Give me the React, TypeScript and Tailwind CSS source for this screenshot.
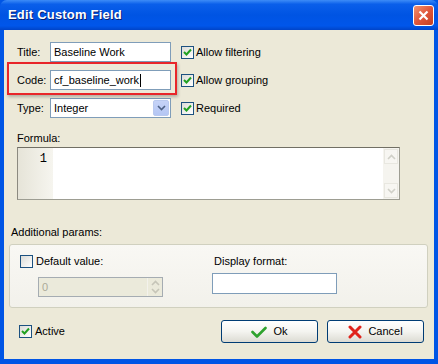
import React from 'react';

const font = { fontFamily: '"Liberation Sans", Arial, sans-serif' };

const Check: React.FC<{ checked?: boolean }> = ({ checked }) => (
    <div className="w-[13px] h-[13px] border border-[#1c5180] bg-gradient-to-br from-[#dcdcd7] to-white flex items-center justify-center shrink-0">
        {checked && (
            <svg width="9" height="9" viewBox="0 0 9 9">
                <path d="M1 4 L3.5 6.5 L8 1.5" fill="none" stroke="#21a121" strokeWidth="2" />
            </svg>
        )}
    </div>
);

const TextBox: React.FC<{ value?: string; w: string; caret?: boolean }> = ({ value, w, caret }) => (
    <div className={`${w} h-[20px] border border-[#7f9db9] bg-white flex items-center px-[3px] text-[11px] text-black`}>
        {value}
        {caret && <span className="inline-block w-px h-[13px] bg-black ml-px" />}
    </div>
);

const Arrow: React.FC<{ up?: boolean; color: string }> = ({ up, color }) => (
    <svg width="9" height="6" viewBox="0 0 9 6">
        <path d={up ? 'M1 5 L4.5 1.5 L8 5' : 'M1 1 L4.5 4.5 L8 1'} fill="none" stroke={color} strokeWidth="1.6" />
    </svg>
);

const XpButton: React.FC<{ children: React.ReactNode }> = ({ children }) => (
    <div className="w-[97px] h-[23px] rounded-[3px] border border-[#003c74] bg-gradient-to-b from-white via-[#f4f4f0] to-[#dcdbd3] flex items-center justify-center gap-[6px] text-[11px] text-black">
        {children}
    </div>
);

export default function App() {
    return (
        <div className="w-[438px] h-[364px] bg-[#0055e5] flex flex-col overflow-hidden select-none" style={font}>
            {/* Title bar */}
            <div className="h-[30px] shrink-0 flex items-center justify-between pl-[8px] pr-[4px] rounded-t-[7px] bg-[linear-gradient(to_bottom,#3d8cf7_0%,#0a5fea_14%,#0054e3_50%,#0056ea_86%,#0044c8_100%)]">
                <span className="text-white font-bold text-[13px] tracking-[0.2px] [text-shadow:1px_1px_0_#0a1e6e]">Edit Custom Field</span>
                <div className="w-[21px] h-[21px] rounded-[3px] border border-white bg-gradient-to-br from-[#f0926f] via-[#e0563b] to-[#c4401f] flex items-center justify-center">
                    <svg width="11" height="11" viewBox="0 0 11 11">
                        <path d="M1.5 1.5 L9.5 9.5 M9.5 1.5 L1.5 9.5" stroke="white" strokeWidth="2.2" />
                    </svg>
                </div>
            </div>

            {/* Client area */}
            <div className="relative mx-[4px] h-[329px] bg-[#ece9d8] text-[11px] text-black">
                <div className="flex flex-col gap-[8px] pt-[12px] pl-[13px]">
                    <div className="flex items-center h-[20px]">
                        <span className="w-[33px]">Title:</span>
                        <TextBox w="w-[121px]" value="Baseline Work" />
                        <div className="flex items-center gap-[2px] ml-[10px]">
                            <Check checked />
                            <span>Allow filtering</span>
                        </div>
                    </div>
                    <div className="flex items-center h-[20px]">
                        <span className="w-[33px]">Code:</span>
                        <TextBox w="w-[121px]" value="cf_baseline_work" caret />
                        <div className="flex items-center gap-[2px] ml-[10px]">
                            <Check checked />
                            <span>Allow grouping</span>
                        </div>
                    </div>
                    <div className="flex items-center h-[20px]">
                        <span className="w-[33px]">Type:</span>
                        <div className="w-[121px] h-[20px] border border-[#7f9db9] bg-white flex items-center justify-between pl-[3px] pr-px">
                            <span>Integer</span>
                            <div className="w-[16px] h-[16px] rounded-[2px] bg-gradient-to-b from-[#c6d3f7] to-[#b4c6f4] border border-[#b9c9ef] flex items-center justify-center">
                                <Arrow color="#4d6185" />
                            </div>
                        </div>
                        <div className="flex items-center gap-[2px] ml-[10px]">
                            <Check checked />
                            <span>Required</span>
                        </div>
                    </div>
                </div>

                {/* Annotation box around Code row */}
                <div className="absolute left-[3px] top-[32px] w-[170px] h-[33px] border-2 border-[#e8262a] shadow-[1px_2px_3px_rgba(0,0,0,0.25)]" />

                <div className="ml-[13px] mt-[14px] leading-[13px]">Formula:</div>
                <div className="ml-[13px] mt-[2px] w-[383px] h-[53px] flex border border-[#9d9d92] border-t-[#716f64] border-l-[#8c8a80] bg-white">
                    <div className="w-[35px] h-full bg-gradient-to-r from-[#e6e4d8] to-[#f6f5ef] flex justify-end pr-[6px] pt-[5px] font-['Liberation_Mono',monospace] text-[12px] leading-[12px]">1</div>
                    <div className="flex-1" />
                    <div className="w-[16px] h-full bg-[#f5f4ef] flex flex-col justify-between p-px">
                        <div className="h-[15px] border border-[#e8e7e0] bg-[#f7f6f2] flex items-center justify-center"><Arrow up color="#d0d0c8" /></div>
                        <div className="h-[15px] border border-[#e8e7e0] bg-[#f7f6f2] flex items-center justify-center"><Arrow color="#d0d0c8" /></div>
                    </div>
                </div>

                <div className="ml-[7px] mt-[26px] leading-[12px]">Additional params:</div>
                <div className="ml-[5px] mt-[6px] w-[419px] h-[64px] rounded-[3px] border border-[#d0d0bf] bg-gradient-to-b from-[#f9f8f4] to-[#f2f1eb] flex pl-[10px] pt-[10px]">
                    <div className="w-[192px] flex flex-col">
                        <div className="flex items-center gap-[3px] h-[13px]">
                            <Check />
                            <span>Default value:</span>
                        </div>
                        <div className="ml-[18px] mt-[9px] w-[125px] h-[20px] border border-[#a5acb2] bg-[#ebeadb] flex items-center justify-between pl-[3px]">
                            <span className="text-[#acaa99]">0</span>
                            <div className="w-[15px] h-full flex flex-col items-center justify-center gap-[2px] border-l border-[#f3f2ec]">
                                <Arrow up color="#c6c5b8" />
                                <Arrow color="#c6c5b8" />
                            </div>
                        </div>
                    </div>
                    <div className="flex flex-col">
                        <div className="ml-[2px] leading-[13px]">Display format:</div>
                        <div className="mt-[5px] w-[125px] h-[21px] border border-[#7f9db9] bg-white" />
                    </div>
                </div>

                <div className="flex items-center mt-[12px] pl-[15px] pr-[10px]">
                    <div className="flex items-center gap-[3px]">
                        <Check checked />
                        <span>Active</span>
                    </div>
                    <div className="ml-auto flex gap-[9px]">
                        <XpButton>
                            <svg width="16" height="12" viewBox="0 0 16 12">
                                <path d="M1.5 6 L6 10.5 L14.5 2" fill="none" stroke="#2ea22e" strokeWidth="2.6" strokeLinecap="round" strokeLinejoin="round" />
                            </svg>
                            <span>Ok</span>
                        </XpButton>
                        <XpButton>
                            <svg width="14" height="14" viewBox="0 0 14 14">
                                <path d="M2 2 L12 12 M12 2 L2 12" stroke="#e0231c" strokeWidth="3" strokeLinecap="round" />
                            </svg>
                            <span>Cancel</span>
                        </XpButton>
                    </div>
                </div>
            </div>
        </div>
    );
}
